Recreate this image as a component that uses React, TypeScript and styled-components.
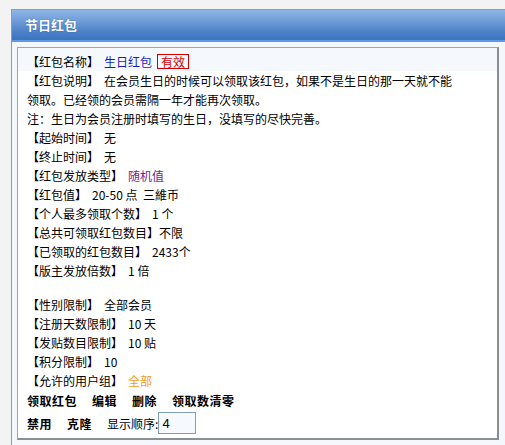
import styled, { createGlobalStyle } from 'styled-components'
import { FC } from 'react'

const GlobalStyle = createGlobalStyle`
  html, body {
    margin: 0;
    padding: 0;
    background: #f3f3f3;
    overflow: hidden;
  }
  body {
    font-family: "Noto Sans CJK SC", "Liberation Sans", sans-serif;
    font-size: 12px;
    color: #000;
  }
`

interface Field {
  label: string
  value?: string
  tone?: 'blue' | 'purple' | 'orange'
  tight?: boolean
}

const timeFields: Field[] = [
  { label: '起始时间', value: '无' },
  { label: '终止时间', value: '无' },
  { label: '红包发放类型', value: '随机值', tone: 'purple' },
  { label: '红包值', value: '20-50 点  三維币' },
  { label: '个人最多领取个数', value: '1 个' },
  { label: '总共可领取红包数目', value: '不限', tight: true },
  { label: '已领取的红包数目', value: '2433个' },
  { label: '版主发放倍数', value: '1 倍' },
]

const limitFields: Field[] = [
  { label: '性别限制', value: '全部会员' },
  { label: '注册天数限制', value: '10 天' },
  { label: '发贴数目限制', value: '10 贴' },
  { label: '积分限制', value: '10' },
  { label: '允许的用户组', value: '全部', tone: 'orange' },
]

const FieldRow: FC<{ field: Field }> = ({ field }) => (
  <Row>
    <span>【{field.label}】</span>
    {!field.tight && <Spacer />}
    <Value tone={field.tone}>{field.value}</Value>
  </Row>
)

const App: FC = () => {
  return (
    <>
      <GlobalStyle />
      <Panel>
        <PanelHeader>节日红包</PanelHeader>
        <PanelBody>
          <InfoBox>
            <NameRow>
              <span>【红包名称】</span>
              <Spacer />
              <Value tone="blue">生日红包</Value>
              <Badge>有效</Badge>
            </NameRow>
            <Row>
              <span>【红包说明】</span>
              <Spacer />
              在会员生日的时候可以领取该红包，如果不是生日的那一天就不能
            </Row>
            <Row>领取。已经领的会员需隔一年才能再次领取。</Row>
            <Row>注：生日为会员注册时填写的生日，没填写的尽快完善。</Row>
            {timeFields.map(f => (
              <FieldRow key={f.label} field={f} />
            ))}
            <Gap />
            {limitFields.map(f => (
              <FieldRow key={f.label} field={f} />
            ))}
            <Actions>
              <ActionLink>领取红包</ActionLink>
              <ActionLink>编辑</ActionLink>
              <ActionLink>删除</ActionLink>
              <ActionLink>领取数清零</ActionLink>
            </Actions>
            <Actions>
              <ActionLink>禁用</ActionLink>
              <ActionLink>克隆</ActionLink>
              <OrderLabel>显示顺序:</OrderLabel>
              <OrderInput defaultValue="4" />
            </Actions>
          </InfoBox>
        </PanelBody>
      </Panel>
    </>
  )
}

const Panel = styled.div`
  margin: 9px 0 0 11px;
  width: 520px;
  height: 460px;
  border: 1px solid #8e9cb2;
  background: #f4f7fc;
`
const PanelHeader = styled.div`
  height: 30px;
  line-height: 30px;
  padding-left: 13px;
  color: #fff;
  font-weight: bold;
  font-size: 13px;
  text-shadow: 0 0 1px rgba(0, 40, 110, 0.6);
  background: linear-gradient(to bottom, #8fb6e6 0%, #6c9ad6 40%, #4a80c8 75%, #3d73bd 100%);
  border-bottom: 2px solid #5d9bea;
`
const PanelBody = styled.div`
  padding: 5px 0 0 5px;
`
const InfoBox = styled.div`
  width: 470px;
  height: 386px;
  padding: 4px 0 0 9px;
  background: #fff;
  border: 1px solid #a3a3a8;
  border-right: 2px solid #8d8d94;
  border-bottom: 2px solid #8d8d94;
`
const Row = styled.div`
  height: 19px;
  line-height: 19px;
  white-space: pre;
  overflow: hidden;
`
const NameRow = styled(Row)`
  display: flex;
  align-items: center;
  height: 19px;
  margin: -4px 0 0 -9px;
  padding: 4px 0 0 9px;
  background: #f5f8fd;
`
const Spacer = styled.span`
  display: inline-block;
  width: 5px;
`
const Value = styled.span<{ tone?: 'blue' | 'purple' | 'orange' }>`
  color: ${p =>
    p.tone === 'blue'
      ? '#1b1bc4'
      : p.tone === 'purple'
      ? '#7d1b8a'
      : p.tone === 'orange'
      ? '#f39a1c'
      : '#000'};
`
const Badge = styled.span`
  margin-left: 5px;
  padding: 0 3px;
  height: 13px;
  line-height: 13px;
  color: #d00000;
  border: 1px solid #d00000;
`
const Gap = styled.div`
  height: 15px;
`
const Actions = styled.div`
  display: flex;
  align-items: center;
  gap: 15px;
  height: 19px;
  line-height: 19px;
  margin-top: 1px;
  & + & {
    height: 22px;
    margin-top: 2px;
  }
`
const ActionLink = styled.span`
  font-weight: bold;
  letter-spacing: 0.5px;
  color: #000;
  cursor: pointer;
`
const OrderLabel = styled.span`
  margin-right: -15px;
`
const OrderInput = styled.input`
  box-sizing: border-box;
  width: 38px;
  height: 22px;
  padding: 0 0 0 3px;
  border: 1px solid #7f9db9;
  background: #f6f9fe;
  font-family: "Liberation Sans", sans-serif;
  font-size: 13px;
  outline: none;
`

export default App
